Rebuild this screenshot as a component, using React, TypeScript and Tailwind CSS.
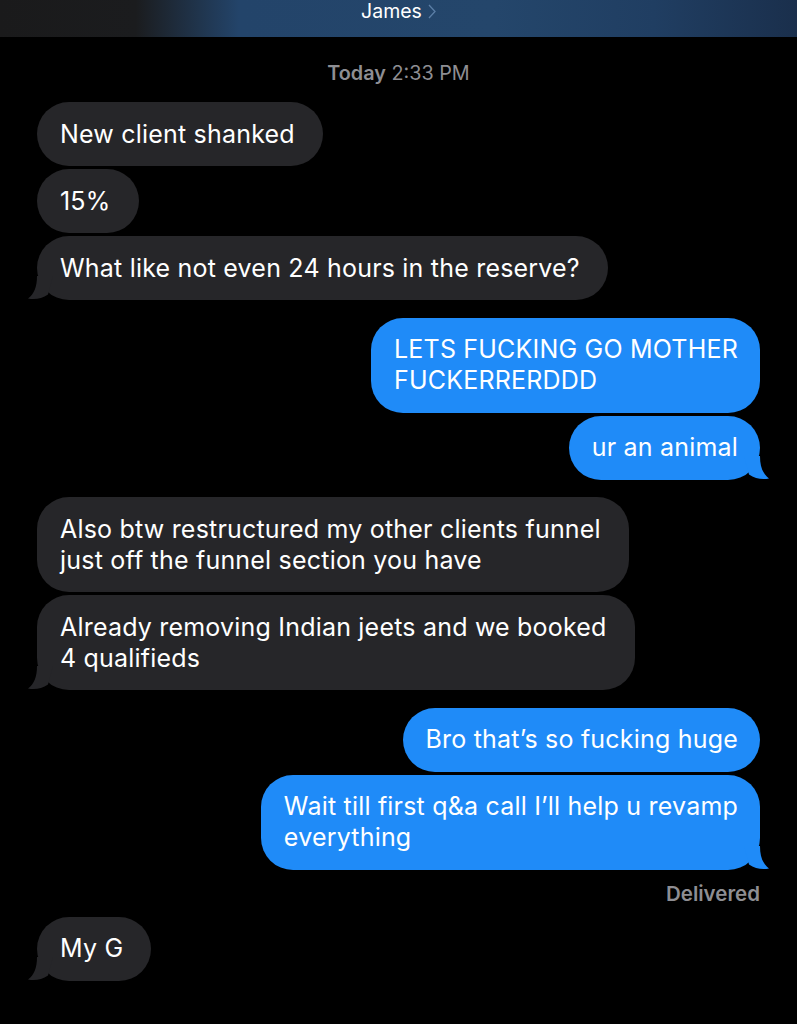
import React from "react";

type Msg = { from: "me" | "them"; lines: string[]; tail?: boolean };

const messages: Msg[] = [
  { from: "them", lines: ["New client shanked"] },
  { from: "them", lines: ["15%"] },
  { from: "them", lines: ["What like not even 24 hours in the reserve?"], tail: true },
  { from: "me", lines: ["LETS FUCKING GO MOTHER", "FUCKERRERDDD"] },
  { from: "me", lines: ["ur an animal"], tail: true },
  { from: "them", lines: ["Also btw restructured my other clients funnel", "just off the funnel section you have"] },
  { from: "them", lines: ["Already removing Indian jeets and we booked", "4 qualifieds"], tail: true },
  { from: "me", lines: ["Bro that\u2019s so fucking huge"] },
  { from: "me", lines: ["Wait till first q&a call I\u2019ll help u revamp", "everything"], tail: true },
];

function Tail({ side }: { side: "left" | "right" }) {
  if (side === "left") {
    return (
      <svg className="absolute -left-[10px] bottom-0" width="26" height="24" viewBox="0 0 26 24">
        <path d="M10 0 C10 11 7 18 1 22.5 C8 24 15 22.5 21 18.5 L26 0 Z" fill="#262629" />
      </svg>
    );
  }
  return (
    <svg className="absolute -right-[10px] bottom-0" width="26" height="24" viewBox="0 0 26 24">
      <path d="M16 0 C16 11 19 18 25 22.5 C18 24 11 22.5 5 18.5 L0 0 Z" fill="#1f8bf8" />
    </svg>
  );
}

function Bubble({ m }: { m: Msg }) {
  const me = m.from === "me";
  return (
    <div className={`flex ${me ? "justify-end" : "justify-start"}`}>
      <div
        className={`relative rounded-[32px] py-[16.5px] text-[25px] leading-[31px] tracking-[0.2px] whitespace-nowrap text-white ${
          me ? "bg-[#1f8bf8] pl-[23px] pr-[22px]" : "bg-[#262629] pl-[23px] pr-[28px]"
        }`}
      >
        {m.tail && <Tail side={me ? "right" : "left"} />}
        <div className="relative">
          {m.lines.map((l, i) => (
            <div key={i}>{l}</div>
          ))}
        </div>
      </div>
    </div>
  );
}

export default function App() {
  return (
    <div className="w-[797px] h-[1024px] bg-black overflow-hidden font-['Inter',sans-serif]">
      <div className="h-[37px] flex items-start justify-center bg-[linear-gradient(90deg,#1a1a1b_0%,#1b1c1e_17%,#23446a_30%,#24466b_62%,#203e62_82%,#1a2f4c_100%)]">
        <div className="flex items-center gap-[6px] text-white text-[19.5px] leading-[22px]">
          <span>James</span>
          <svg width="8" height="15" viewBox="0 0 8 15">
            <path d="M1 1 L7 7.5 L1 14" stroke="#5b7ea6" strokeWidth="1.3" fill="none" />
          </svg>
        </div>
      </div>

      <div className="text-center text-[#8e8e93] text-[19.8px] leading-[22px] mt-[25px]">
        <span className="font-semibold">Today</span> <span>2:33 PM</span>
      </div>

      <div className="px-[37px] mt-[18px] flex flex-col">
        {messages.map((m, i) => (
          <div key={i} className={i === 0 ? "" : messages[i - 1].from === m.from ? "mt-[3px]" : "mt-[17.5px]"}>
            <Bubble m={m} />
          </div>
        ))}
        <div className="text-right text-[#8e8e93] font-semibold text-[20.5px] leading-[22px] mt-[13px]">Delivered</div>
        <div className="mt-[12px]">
          <Bubble m={{ from: "them", lines: ["My G"], tail: true }} />
        </div>
      </div>
    </div>
  );
}
